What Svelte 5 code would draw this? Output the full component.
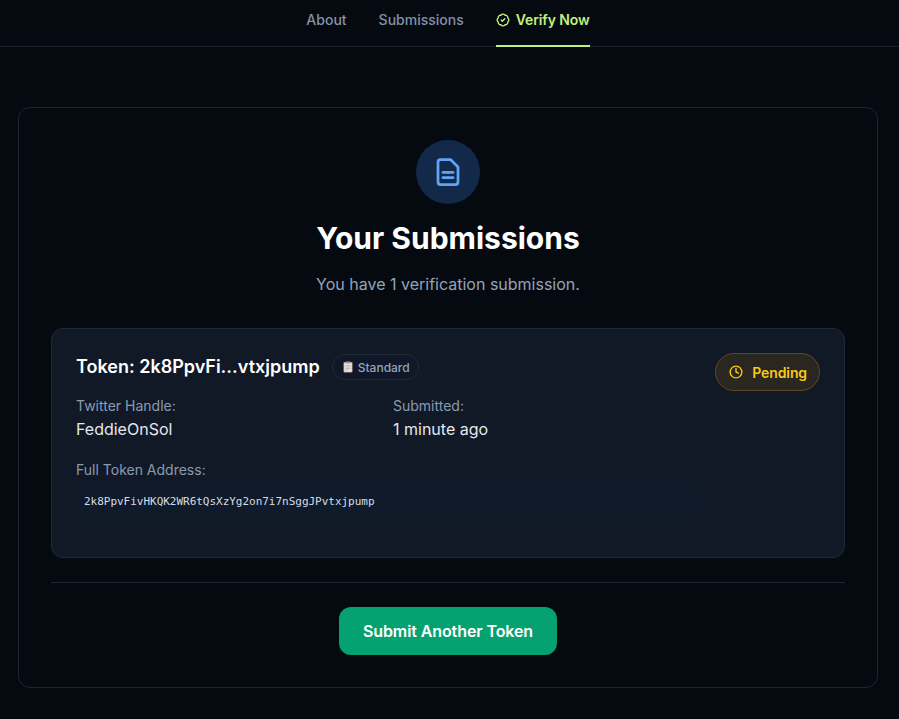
<script>
	const tabs = ['About', 'Submissions'];
	const fullAddress = '2k8PpvFivHKQK2WR6tQsXzYg2on7i7nSggJPvtxjpump';
</script>

<nav class="nav">
	{#each tabs as tab}
		<span class="tab">{tab}</span>
	{/each}
	<span class="tab active">
		<svg viewBox="0 0 24 24" fill="none" stroke="currentColor" stroke-width="2.4" stroke-linecap="round" stroke-linejoin="round" class="tab-icon">
			<path d="M3.85 8.62a4 4 0 0 1 4.78-4.77 4 4 0 0 1 6.74 0 4 4 0 0 1 4.78 4.78 4 4 0 0 1 0 6.74 4 4 0 0 1-4.77 4.78 4 4 0 0 1-6.75 0 4 4 0 0 1-4.78-4.77 4 4 0 0 1 0-6.76Z"></path>
			<path d="m9 12 2 2 4-4"></path>
		</svg>
		Verify Now
	</span>
</nav>

<main class="page">
	<section class="panel">
		<div class="circle">
			<svg viewBox="0 0 24 24" fill="none" stroke="currentColor" stroke-width="2.2" stroke-linecap="round" stroke-linejoin="round" class="doc-icon">
				<path d="M14 2H6a2 2 0 0 0-2 2v16a2 2 0 0 0 2 2h12a2 2 0 0 0 2-2V8Z"></path>
				<path d="M16 12.3H8"></path>
				<path d="M16 16.5H8"></path>
			</svg>
		</div>
		<h1>Your Submissions</h1>
		<p class="sub">You have 1 verification submission.</p>

		<div class="item">
			<div class="item-main">
				<div class="item-title">
					<h2>Token: 2k8PpvFi...vtxjpump</h2>
					<span class="type">
						<svg viewBox="0 0 12 12" class="clip">
							<rect x="1.5" y="1" width="9" height="10.5" rx="1" fill="#b9a488"></rect>
							<rect x="2.3" y="2" width="7.4" height="8.8" fill="#ece9e2"></rect>
							<rect x="3.5" y="0.5" width="5" height="2" rx="0.5" fill="#9a9a9a"></rect>
							<path d="M3.5 4.5h5M3.5 6h5M3.5 7.5h5M3.5 9h3" stroke="#a8a8a8" stroke-width="0.7"></path>
						</svg>
						Standard
					</span>
				</div>
				<div class="details">
					<div>
						<div class="label">Twitter Handle:</div>
						<div class="value">FeddieOnSol</div>
					</div>
					<div>
						<div class="label">Submitted:</div>
						<div class="value">1 minute ago</div>
					</div>
				</div>
				<div class="label">Full Token Address:</div>
				<code class="address">{fullAddress}</code>
			</div>
			<span class="status">
				<svg viewBox="0 0 24 24" fill="none" stroke="currentColor" stroke-width="2.4" stroke-linecap="round" stroke-linejoin="round" class="clock">
					<circle cx="12" cy="12" r="10"></circle>
					<path d="M12 6v6l4 2"></path>
				</svg>
				Pending
			</span>
		</div>

		<div class="actions">
			<button class="submit">Submit Another Token</button>
		</div>
	</section>
</main>

<style>
	:global(body) {
		background: #050a11;
		font-family: Inter, 'Liberation Sans', sans-serif;
	}

	.nav {
		height: 46px;
		padding-right: 3px;
		display: flex;
		justify-content: center;
		gap: 32px;
		border-bottom: 1px solid #1a202c;
	}

	.tab {
		display: flex;
		align-items: center;
		gap: 6px;
		height: 46px;
		padding-bottom: 6px;
		box-sizing: border-box;
		color: #8192aa;
		font-size: 14px;
		font-weight: 500;
		line-height: 20px;
	}

	.tab.active {
		color: #c2f07c;
		border-bottom: 2px solid #c2f07c;
		height: 47px;
		font-weight: 600;
		letter-spacing: -0.1px;
	}

	.tab-icon {
		width: 14px;
		height: 14px;
	}

	.page {
		padding: 60px 21px 31px 18px;
	}

	.panel {
		border: 1px solid #1f2733;
		border-radius: 12px;
		padding: 32px;
		display: flex;
		flex-direction: column;
		align-items: center;
	}

	.circle {
		width: 64px;
		height: 64px;
		border-radius: 50%;
		background: #12294a;
		color: #60a5fa;
		display: flex;
		align-items: center;
		justify-content: center;
	}

	.doc-icon {
		width: 30px;
		height: 30px;
	}

	h1 {
		margin: 16px 0 0;
		color: #fff;
		font-size: 30px;
		line-height: 36px;
		font-weight: 700;
	}

	.sub {
		margin: 16px 0 0;
		color: #94a3b8;
		font-size: 16px;
		line-height: 24px;
	}

	.item {
		align-self: stretch;
		margin-top: 32px;
		box-sizing: border-box;
		height: 230px;
		padding: 24px;
		background: #111927;
		border: 1px solid #1f2937;
		border-radius: 12px;
		display: flex;
		justify-content: space-between;
		align-items: flex-start;
	}

	.item-main {
		width: 624px;
	}

	.item-title {
		display: flex;
		align-items: center;
		gap: 12px;
		height: 28px;
	}

	h2 {
		margin: 0;
		color: #fff;
		font-size: 18px;
		line-height: 28px;
		font-weight: 600;
	}

	.type {
		display: flex;
		align-items: center;
		gap: 4px;
		height: 26px;
		box-sizing: border-box;
		padding: 0 8px 0 9px;
		background: #0f1728;
		border: 1px solid #1f2937;
		border-radius: 999px;
		color: #94a3b8;
		font-size: 12px;
		font-weight: 500;
	}

	.clip {
		width: 12px;
		height: 12px;
	}

	.details {
		display: grid;
		grid-template-columns: 317px 1fr;
		margin-top: 15px;
		margin-bottom: 19px;
	}

	.label {
		color: #8a9ab0;
		font-size: 14px;
		line-height: 20px;
	}

	.value {
		margin-top: 1px;
		color: #e5e7eb;
		font-size: 16px;
		line-height: 24px;
	}

	.address {
		display: block;
		margin-top: 6px;
		padding: 8px;
		background: #0f1a2a;
		border-radius: 4px;
		color: #d8dce2;
		font-family: 'DejaVu Sans Mono', monospace;
		font-size: 11px;
		line-height: 16px;
		letter-spacing: -0.02px;
	}

	.status {
		display: flex;
		align-items: center;
		gap: 9px;
		height: 38px;
		box-sizing: border-box;
		padding: 0 12px 0 13px;
		background: #2a2620;
		border: 1px solid #5c4a22;
		border-radius: 999px;
		color: #f9c916;
		font-size: 14px;
		font-weight: 600;
		letter-spacing: -0.1px;
	}

	.clock {
		width: 14px;
		height: 14px;
	}

	.actions {
		align-self: stretch;
		margin-top: 24px;
		padding-top: 24px;
		border-top: 1px solid #1f2733;
		display: flex;
		justify-content: center;
	}

	.submit {
		height: 48px;
		padding: 0 24px;
		border: none;
		border-radius: 12px;
		background: #05a170;
		color: #fff;
		font-family: inherit;
		font-size: 16px;
		font-weight: 600;
		letter-spacing: -0.1px;
	}
</style>
